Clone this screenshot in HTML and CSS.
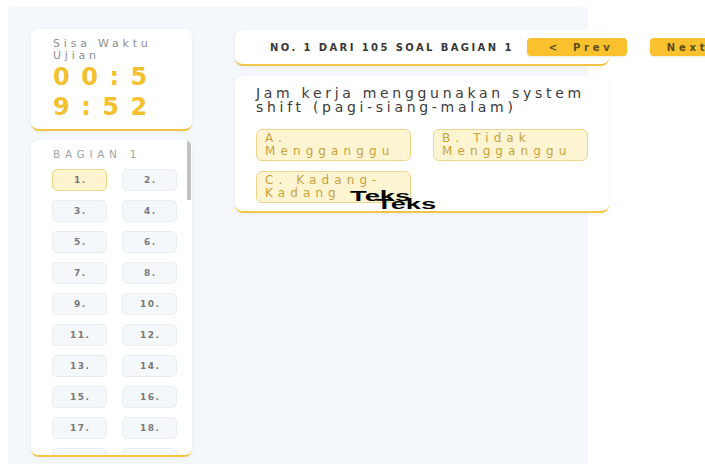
FILE: index.html
```html
<!DOCTYPE html>
<html lang="id">
<head>
<meta charset="utf-8">
<title>Ujian - Bagian 1</title>
<link rel="stylesheet" href="styles.css">
</head>
<body>
<div class="exam">
  <aside class="sidebar">
    <section class="card timer-card">
      <div class="timer-label">Sisa Waktu Ujian</div>
      <div class="timer-value">00:59:52</div>
    </section>
    <nav class="card nav-card">
      <div class="nav-title">BAGIAN 1</div>
      <div class="nav-grid">
        <button class="q-btn active">1.</button><button class="q-btn">2.</button>
        <button class="q-btn">3.</button><button class="q-btn">4.</button>
        <button class="q-btn">5.</button><button class="q-btn">6.</button>
        <button class="q-btn">7.</button><button class="q-btn">8.</button>
        <button class="q-btn">9.</button><button class="q-btn">10.</button>
        <button class="q-btn">11.</button><button class="q-btn">12.</button>
        <button class="q-btn">13.</button><button class="q-btn">14.</button>
        <button class="q-btn">15.</button><button class="q-btn">16.</button>
        <button class="q-btn">17.</button><button class="q-btn">18.</button>
        <button class="q-btn">19.</button><button class="q-btn">20.</button>
        <button class="q-btn">21.</button><button class="q-btn">22.</button>
        <button class="q-btn">23.</button><button class="q-btn">24.</button>
        <button class="q-btn">25.</button><button class="q-btn">26.</button>
        <button class="q-btn">27.</button><button class="q-btn">28.</button>
        <button class="q-btn">29.</button><button class="q-btn">30.</button>
        <button class="q-btn">31.</button><button class="q-btn">32.</button>
        <button class="q-btn">33.</button><button class="q-btn">34.</button>
        <button class="q-btn">35.</button><button class="q-btn">36.</button>
        <button class="q-btn">37.</button><button class="q-btn">38.</button>
        <button class="q-btn">39.</button><button class="q-btn">40.</button>
        <button class="q-btn">41.</button><button class="q-btn">42.</button>
        <button class="q-btn">43.</button><button class="q-btn">44.</button>
        <button class="q-btn">45.</button><button class="q-btn">46.</button>
        <button class="q-btn">47.</button><button class="q-btn">48.</button>
        <button class="q-btn">49.</button><button class="q-btn">50.</button>
        <button class="q-btn">51.</button><button class="q-btn">52.</button>
        <button class="q-btn">53.</button><button class="q-btn">54.</button>
        <button class="q-btn">55.</button><button class="q-btn">56.</button>
        <button class="q-btn">57.</button><button class="q-btn">58.</button>
        <button class="q-btn">59.</button><button class="q-btn">60.</button>
        <button class="q-btn">61.</button><button class="q-btn">62.</button>
        <button class="q-btn">63.</button><button class="q-btn">64.</button>
        <button class="q-btn">65.</button><button class="q-btn">66.</button>
        <button class="q-btn">67.</button><button class="q-btn">68.</button>
        <button class="q-btn">69.</button><button class="q-btn">70.</button>
        <button class="q-btn">71.</button><button class="q-btn">72.</button>
        <button class="q-btn">73.</button><button class="q-btn">74.</button>
        <button class="q-btn">75.</button><button class="q-btn">76.</button>
        <button class="q-btn">77.</button><button class="q-btn">78.</button>
        <button class="q-btn">79.</button><button class="q-btn">80.</button>
        <button class="q-btn">81.</button><button class="q-btn">82.</button>
        <button class="q-btn">83.</button><button class="q-btn">84.</button>
        <button class="q-btn">85.</button><button class="q-btn">86.</button>
        <button class="q-btn">87.</button><button class="q-btn">88.</button>
        <button class="q-btn">89.</button><button class="q-btn">90.</button>
        <button class="q-btn">91.</button><button class="q-btn">92.</button>
        <button class="q-btn">93.</button><button class="q-btn">94.</button>
        <button class="q-btn">95.</button><button class="q-btn">96.</button>
        <button class="q-btn">97.</button><button class="q-btn">98.</button>
        <button class="q-btn">99.</button><button class="q-btn">100.</button>
        <button class="q-btn">101.</button><button class="q-btn">102.</button>
        <button class="q-btn">103.</button><button class="q-btn">104.</button>
        <button class="q-btn">105.</button>
      </div>
    </nav>
  </aside>

  <main class="content">
    <header class="card q-header">
      <span class="q-counter">NO. 1 DARI 105 SOAL BAGIAN 1</span>
      <button class="nav-btn prev"><span>&lt;</span><span>Prev</span></button>
      <button class="nav-btn next"><span>Next</span><span>&gt;</span></button>
    </header>

    <section class="card question">
      <p class="q-text">Jam kerja menggunakan system shift (pagi-siang-malam)</p>
      <div class="options">
        <button class="option">A. Mengganggu</button>
        <button class="option">B. Tidak Mengganggu</button>
        <button class="option">C. Kadang-Kadang</button>
      </div>
      <span class="tag tag-first">Teks</span>
      <span class="tag tag-second">Teks</span>
    </section>
  </main>
</div>
</body>
</html>
```

FILE: styles.css
```css
* {
  box-sizing: border-box;
}

html,
body {
  margin: 0;
  overflow: hidden;
  background: #ffffff;
}

body {
  font-family: "DejaVu Sans", "Noto Sans", sans-serif;
}

button {
  font-family: inherit;
  margin: 0;
  cursor: pointer;
}

/* page shell */
.exam {
  margin: 7px 0 0 8px;
  width: 580px;
  height: 457px;
  background: #f4f7fb;
  display: flex;
  align-items: flex-start;
  gap: 43px;
  padding: 22px 0 0 23px;
}

.card {
  background: #ffffff;
  border-radius: 8px;
  border-bottom: 2px solid #f2c544;
  box-shadow: 0 1px 4px rgba(60, 70, 90, 0.06);
}

/* left column */
.sidebar {
  flex: 0 0 161px;
  display: flex;
  flex-direction: column;
  gap: 9px;
}

.timer-card {
  padding: 9px 22px 7px;
}

.timer-label {
  font-size: 11px;
  line-height: 12px;
  letter-spacing: 3.8px;
  color: #8e8e8e;
}

.timer-value {
  font-size: 24px;
  font-weight: bold;
  line-height: 30px;
  letter-spacing: 11.5px;
  color: #f3c12f;
  word-break: break-all;
}

/* question list: scrolls, with a slim thumb drawn at the top right */
.nav-card {
  position: relative;
  height: 317px;
  overflow-y: auto;
  scrollbar-width: none;
  padding: 8px 10px 12px 21px;
}

.nav-card::-webkit-scrollbar {
  display: none;
}

.nav-card::after {
  content: "";
  position: absolute;
  top: 1px;
  right: 1px;
  width: 4px;
  height: 59px;
  background: #c2c2c2;
}

.nav-title {
  font-size: 10.5px;
  line-height: 12px;
  letter-spacing: 4.7px;
  color: #a3a3a3;
  margin: 0 0 9px 1px;
}

.nav-grid {
  display: grid;
  grid-template-columns: 55px 55px;
  gap: 9px 15px;
}

.q-btn {
  height: 22px;
  border: 1px solid #e9eef3;
  background: #f5f8fb;
  border-radius: 5px;
  font-size: 9px;
  font-weight: bold;
  line-height: 20px;
  letter-spacing: 1.5px;
  color: #7a7a7a;
  padding: 0 0 0 1.5px;
}

.q-btn.active {
  background: #fdf3cf;
  border-color: #f0d88c;
}

/* right column */
.content {
  flex: 0 0 374px;
  min-width: 0;
  width: 374px;
  display: flex;
  flex-direction: column;
  gap: 10px;
  margin-top: 1px;
}

.q-header {
  height: 36px;
  display: flex;
  align-items: center;
  padding-left: 35px;
}

.q-counter {
  flex: none;
  white-space: nowrap;
  font-size: 10px;
  font-weight: bold;
  letter-spacing: 2.4px;
  color: #383838;
  margin-right: 13px;
}

.nav-btn {
  flex: none;
  width: 100px;
  height: 18px;
  border: 0;
  border-radius: 4px;
  background: #f8c12d;
  display: flex;
  align-items: center;
  gap: 12px;
  font-size: 10px;
  font-weight: bold;
  letter-spacing: 3.8px;
  color: #5e4b16;
  white-space: nowrap;
  box-shadow: 0 1px 2px rgba(160, 120, 20, 0.15);
}

.nav-btn.prev {
  padding: 0 0 0 22px;
}

.nav-btn.next {
  margin-left: 23px;
  padding: 0 0 0 17px;
}

.question {
  position: relative;
  padding: 10px 15px 8px 21px;
}

.q-text {
  margin: 0;
  font-size: 14px;
  line-height: 14px;
  letter-spacing: 3.7px;
  color: #3b3b3b;
}

.options {
  margin-top: 15px;
  display: grid;
  grid-template-columns: 155px 155px;
  gap: 10px 22px;
}

.option {
  border: 1px solid #eed68f;
  background: #fdf4d2;
  border-radius: 6px;
  padding: 2px 8px;
  font-size: 12px;
  line-height: 13px;
  letter-spacing: 5.1px;
  color: #c8a23c;
  text-align: left;
}

/* text labels laid over the option area */
.tag {
  position: absolute;
  font-family: "Liberation Sans", Arial, sans-serif;
  font-size: 14px;
  font-weight: bold;
  line-height: 14px;
  color: #000000;
  transform: scaleX(1.95);
  transform-origin: 0 50%;
}

.tag-first {
  left: 115px;
  top: 113px;
}

.tag-second {
  left: 141px;
  top: 121px;
}
```
